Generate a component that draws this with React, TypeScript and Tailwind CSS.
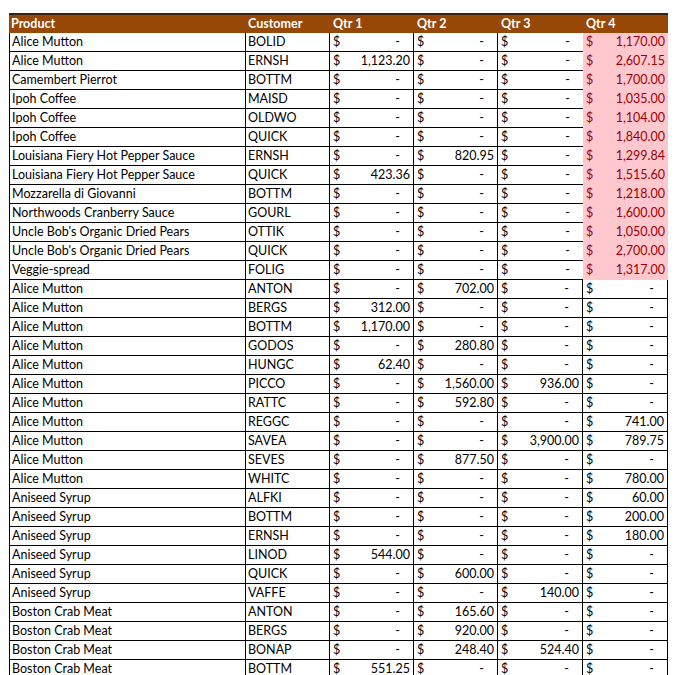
const rows: [string,string,string,string,string,string][] = [
["Alice Mutton","BOLID","-","-","-","1,170.00"],
["Alice Mutton","ERNSH","1,123.20","-","-","2,607.15"],
["Camembert Pierrot","BOTTM","-","-","-","1,700.00"],
["Ipoh Coffee","MAISD","-","-","-","1,035.00"],
["Ipoh Coffee","OLDWO","-","-","-","1,104.00"],
["Ipoh Coffee","QUICK","-","-","-","1,840.00"],
["Louisiana Fiery Hot Pepper Sauce","ERNSH","-","820.95","-","1,299.84"],
["Louisiana Fiery Hot Pepper Sauce","QUICK","423.36","-","-","1,515.60"],
["Mozzarella di Giovanni","BOTTM","-","-","-","1,218.00"],
["Northwoods Cranberry Sauce","GOURL","-","-","-","1,600.00"],
["Uncle Bob's Organic Dried Pears","OTTIK","-","-","-","1,050.00"],
["Uncle Bob's Organic Dried Pears","QUICK","-","-","-","2,700.00"],
["Veggie-spread","FOLIG","-","-","-","1,317.00"],
["Alice Mutton","ANTON","-","702.00","-","-"],
["Alice Mutton","BERGS","312.00","-","-","-"],
["Alice Mutton","BOTTM","1,170.00","-","-","-"],
["Alice Mutton","GODOS","-","280.80","-","-"],
["Alice Mutton","HUNGC","62.40","-","-","-"],
["Alice Mutton","PICCO","-","1,560.00","936.00","-"],
["Alice Mutton","RATTC","-","592.80","-","-"],
["Alice Mutton","REGGC","-","-","-","741.00"],
["Alice Mutton","SAVEA","-","-","3,900.00","789.75"],
["Alice Mutton","SEVES","-","877.50","-","-"],
["Alice Mutton","WHITC","-","-","-","780.00"],
["Aniseed Syrup","ALFKI","-","-","-","60.00"],
["Aniseed Syrup","BOTTM","-","-","-","200.00"],
["Aniseed Syrup","ERNSH","-","-","-","180.00"],
["Aniseed Syrup","LINOD","544.00","-","-","-"],
["Aniseed Syrup","QUICK","-","600.00","-","-"],
["Aniseed Syrup","VAFFE","-","-","140.00","-"],
["Boston Crab Meat","ANTON","-","165.60","-","-"],
["Boston Crab Meat","BERGS","-","920.00","-","-"],
["Boston Crab Meat","BONAP","-","248.40","524.40","-"],
["Boston Crab Meat","BOTTM","551.25","-","-","-"],
];

function Val({v}: {v: string}) {
  return <><span>$</span><span className={v === "-" ? "pr-[10px]" : ""}>{v}</span></>;
}

export default function App() {
  return (
    <div className="w-[680px] h-[675px] bg-white overflow-hidden pt-[13px] pl-[9px]" style={{fontFamily: "Lato, 'Open Sans', sans-serif"}}>
      <div className="w-[659px] text-[12.5px] leading-none text-black">
        <div className="flex h-[20px] items-center bg-[#974706] text-white font-bold border-t-2 border-[#3a2210]">
          <div className="w-[237px] shrink-0 pl-[2px]">Product</div>
          <div className="w-[84px] shrink-0 pl-[2px]">Customer</div>
          <div className="w-[84px] shrink-0 pl-[3px]">Qtr 1</div>
          <div className="w-[84px] shrink-0 pl-[3px]">Qtr 2</div>
          <div className="w-[85px] shrink-0 pl-[3px]">Qtr 3</div>
          <div className="w-[85px] shrink-0 pl-[3px]">Qtr 4</div>
        </div>
        {rows.map((r, i) => {
          const hi = i < 13;
          const c = "shrink-0 flex items-center border-b border-black";
          return (
            <div key={i} className="flex h-[19px] items-stretch">
              <div className={`w-[237px] border-l border-r pl-[2px] ${c}`}>{r[0]}</div>
              <div className={`w-[84px] border-r pl-[2px] ${c}`}>{r[1]}</div>
              <div className={`w-[84px] justify-between px-[3px] border-r ${c}`}><Val v={r[2]} /></div>
              <div className={`w-[84px] justify-between px-[3px] border-r ${c}`}><Val v={r[3]} /></div>
              <div className={`w-[85px] justify-between px-[3px] ${hi ? "" : "border-r"} ${c}`}><Val v={r[4]} /></div>
              {hi ? (
                <div className="w-[85px] shrink-0 flex items-center justify-between px-[3px] bg-[#ffc7ce] text-[#9c0006]"><Val v={r[5]} /></div>
              ) : (
                <div className={`w-[85px] justify-between px-[3px] border-r ${c}`}><Val v={r[5]} /></div>
              )}
            </div>
          );
        })}
      </div>
    </div>
  );
}
